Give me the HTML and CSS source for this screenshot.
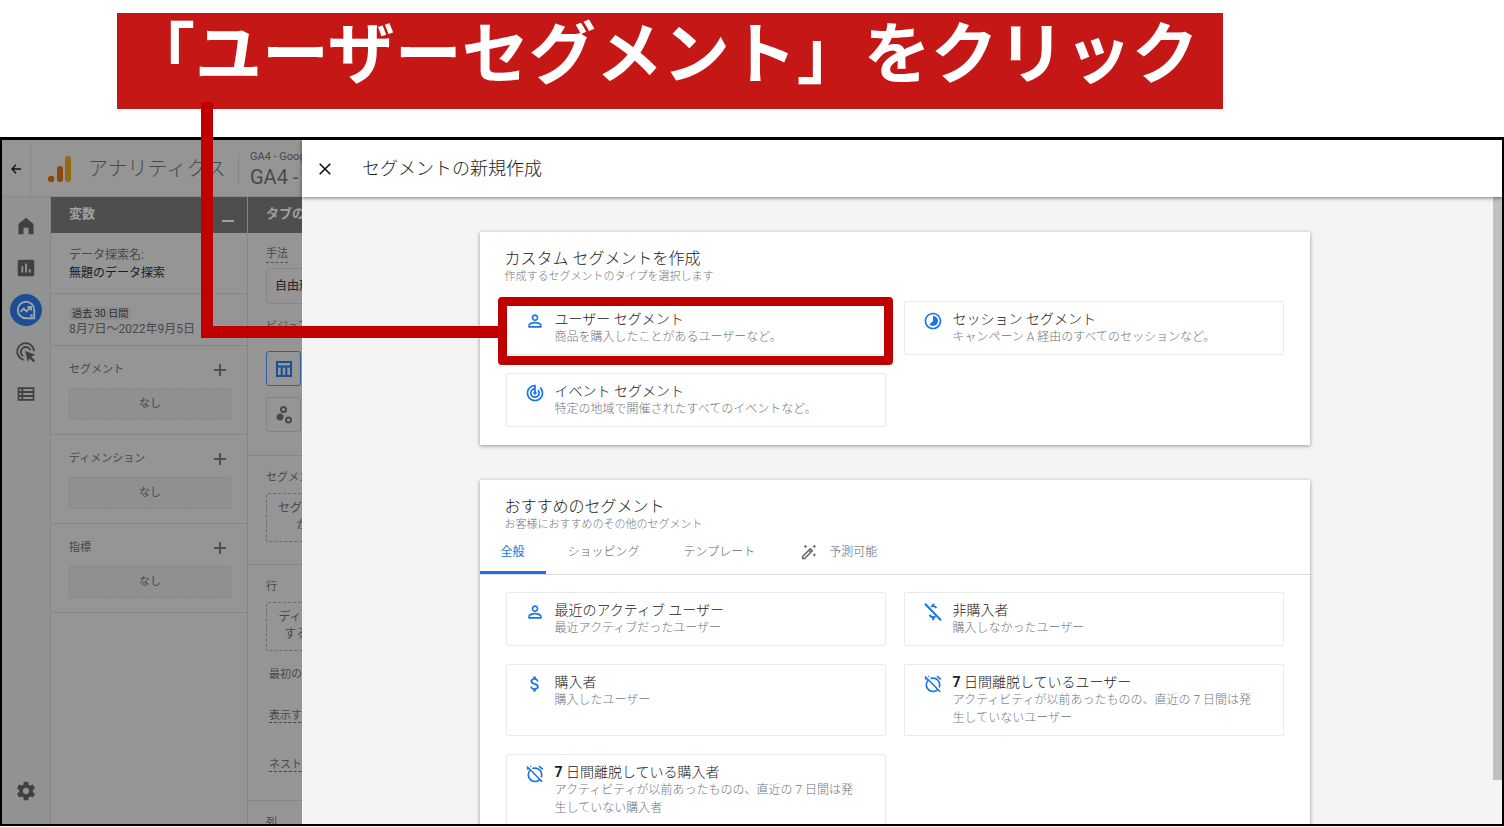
FILE: index.html
```html
<!DOCTYPE html>
<html lang="ja">
<head>
<meta charset="utf-8">
<meta name="viewport" content="width=device-width, initial-scale=1">
<title>セグメントの新規作成</title>
<link rel="stylesheet" href="styles.css">
</head>
<body>
<svg class="sprite" aria-hidden="true">
  <symbol id="i-person" viewBox="0 0 24 24"><path d="M12 5.9a2.1 2.1 0 1 1 0 4.2 2.1 2.1 0 0 1 0-4.2m0 9c2.97 0 6.1 1.46 6.1 2.1v1.1H5.9V17c0-.64 3.13-2.1 6.1-2.1M12 4C9.79 4 8 5.79 8 8s1.79 4 4 4 4-1.79 4-4-1.79-4-4-4zm0 9c-2.67 0-8 1.34-8 4v3h16v-3c0-2.66-5.33-4-8-4z"/></symbol>
  <symbol id="i-session" viewBox="0 0 24 24"><path d="M16.24 7.76A5.974 5.974 0 0 0 12 6v6l-4.24 4.24c2.34 2.34 6.14 2.34 8.49 0a5.99 5.99 0 0 0-.01-8.48zM12 2C6.48 2 2 6.48 2 12s4.48 10 10 10 10-4.48 10-10S17.52 2 12 2zm0 18c-4.42 0-8-3.58-8-8s3.58-8 8-8 8 3.58 8 8-3.58 8-8 8z"/></symbol>
  <symbol id="i-event" viewBox="0 0 24 24"><path d="M19.07 4.93l-1.41 1.41A8.014 8.014 0 0 1 20 12c0 4.42-3.58 8-8 8s-8-3.58-8-8c0-4.08 3.05-7.44 7-7.93v2.02C8.16 6.57 6 9.03 6 12c0 3.31 2.69 6 6 6s6-2.69 6-6c0-1.66-.67-3.16-1.76-4.24l-1.41 1.41C15.55 9.9 16 10.9 16 12c0 2.21-1.79 4-4 4s-4-1.79-4-4c0-1.86 1.28-3.41 3-3.86v2.14c-.6.35-1 .98-1 1.72 0 1.1.9 2 2 2s2-.9 2-2c0-.74-.4-1.38-1-1.72V2h-1C6.48 2 2 6.48 2 12s4.48 10 10 10 10-4.48 10-10c0-2.76-1.12-5.26-2.93-7.07z"/></symbol>
  <symbol id="i-money" viewBox="0 0 24 24"><path d="M11.8 10.9c-2.27-.59-3-1.2-3-2.15 0-1.09 1.01-1.85 2.7-1.85 1.78 0 2.44.85 2.5 2.1h2.21c-.07-1.72-1.12-3.3-3.21-3.81V3h-3v2.16c-1.94.42-3.5 1.68-3.5 3.61 0 2.31 1.91 3.46 4.7 4.13 2.5.6 3 1.48 3 2.41 0 .69-.49 1.79-2.7 1.79-2.06 0-2.87-.92-2.98-2.1h-2.2c.12 2.19 1.76 3.42 3.68 3.83V21h3v-2.15c1.95-.37 3.5-1.5 3.5-3.55 0-2.84-2.43-3.81-4.7-4.4z"/></symbol>
  <symbol id="i-nomoney" viewBox="0 0 24 24"><path d="M1.400 2.900L3.200 1.300 22.600 21.200 20.800 22.800zM11 2h2.600v2.300c1.500.3 2.700 1.200 3.200 2.600l-2 .9c-.5-1.100-1.500-1.700-2.800-1.700-.7 0-1.300.1-1.800.4L8.700 5c.6-.4 1.400-.7 2.300-.8zM7 15.500l2-.8c.5 1.600 1.700 2.400 3.300 2.400.8 0 1.500-.2 2-.5l1.500 1.600c-.6.5-1.400.8-2.300 1V22H11v-2.700c-2-.4-3.400-1.700-4-3.800z"/></symbol>
  <symbol id="i-alarm" viewBox="0 0 24 24"><path d="M12 6c3.87 0 7 3.13 7 7 0 .84-.16 1.65-.43 2.4l1.52 1.52c.58-1.19.91-2.51.91-3.92a9 9 0 0 0-9-9c-1.41 0-2.73.33-3.92.91L9.6 6.43C10.35 6.16 11.16 6 12 6zm10-.28l-4.6-3.86-1.29 1.53 4.6 3.86L22 5.72zM2.92 2.29L1.65 3.57 2.98 4.9l-1.11.93 1.42 1.42 1.11-.94.8.8A8.964 8.964 0 0 0 3 13c0 4.97 4.02 9 9 9 2.25 0 4.31-.83 5.89-2.2l2.2 2.2 1.27-1.27L3.89 3.27l-.97-.98zm13.55 16.1C15.26 19.39 13.7 20 12 20c-3.87 0-7-3.13-7-7 0-1.7.61-3.26 1.61-4.47l9.86 9.86zM8.02 3.28L6.6 1.86l-.86.71 1.42 1.42.86-.71z"/></symbol>
</svg>

<h1 class="banner">「ユーザーセグメント」をクリック</h1>

<div class="window">
  <section class="app" aria-label="アナリティクス">
    <header class="app-head">
      <button class="back" aria-label="戻る"><svg viewBox="0 0 12 12" width="10" height="10"><path class="line thin" d="M12 6H1.500M6 1L1.200 6 6 11"/></svg></button>
      <svg class="logo" viewBox="0 0 24 27" width="24" height="27"><rect x="17" y="0" width="6" height="26" rx="3" fill="#966914"/><rect x="9" y="10" width="6" height="16" rx="3" fill="#884a0c"/><circle cx="3.200" cy="23" r="3.200" fill="#884a0c"/></svg>
      <span class="brand">アナリティクス</span>
      <div class="property"><span class="account">GA4 - Google</span><span class="prop-name">GA4 - Google</span></div>
    </header>
    <div class="app-body">
      <nav class="rail">
        <a href="#" aria-label="ホーム"><svg viewBox="0 0 24 24" width="20" height="20"><path d="M3 9.500V22h6v-8h6v8h6V9.500L12 2z"/></svg></a>
        <a href="#" aria-label="レポート"><svg viewBox="0 0 24 24" width="22" height="22"><path d="M19 3H5c-1.100 0-2 .9-2 2v14c0 1.100.9 2 2 2h14c1.100 0 2-.9 2-2V5c0-1.100-.9-2-2-2zM9 17H7v-7h2v7zm4 0h-2V7h2v10zm4 0h-2v-4h2v4z"/></svg></a>
        <a href="#" aria-label="探索" class="current"><svg viewBox="0 0 24 24" width="22" height="22"><path class="line" d="M12 3a9 9 0 1 0 0 18h9v-9a9 9 0 0 0-9-9z"/><path class="line" d="M6 14l3.500-3.500 3 3L17 9M13.500 8.500h4v4"/><circle cx="18" cy="18" r="1.500"/></svg></a>
        <a href="#" aria-label="広告"><svg viewBox="0 0 24 24" width="22" height="22"><path class="line" d="M9.500 20.500A9.200 9.200 0 1 1 20.800 11"/><path class="line" d="M8.800 16.500A5.400 5.400 0 1 1 16.800 10"/><path d="M11 11l11 4-4.300 2.200 4.300 4.300-1.800 1.800-4.300-4.300L14 23z"/></svg></a>
        <a href="#" aria-label="設定一覧"><svg viewBox="0 0 24 24" width="20" height="20"><path fill-rule="evenodd" d="M2 4h20v16H2zM4 6v2.500h2.500V6zm4.700 0v2.500H20V6zM4 10.700v2.600h2.500v-2.600zm4.700 0v2.600H20v-2.600zM4 15.500V18h2.500v-2.500zm4.700 0V18H20v-2.500z"/></svg></a>
        <a href="#" aria-label="管理" class="admin"><svg viewBox="0 0 24 24" width="22" height="22"><path d="M19.430 12.980c.04-.32.07-.64.07-.98s-.03-.66-.07-.98l2.110-1.650c.19-.15.24-.42.12-.64l-2-3.460c-.12-.22-.39-.3-.61-.22l-2.490 1c-.52-.4-1.080-.73-1.690-.98l-.38-2.650C14.460 2.180 14.250 2 14 2h-4c-.25 0-.46.18-.49.42l-.38 2.650c-.61.25-1.170.59-1.690.98l-2.490-1c-.23-.09-.49 0-.61.22l-2 3.460c-.13.22-.07.49.12.64l2.110 1.650c-.04.32-.07.65-.07.98s.03.66.07.98l-2.110 1.650c-.19.15-.24.42-.12.64l2 3.460c.12.22.39.3.61.22l2.490-1c.52.4 1.080.73 1.690.98l.38 2.650c.03.24.24.42.49.42h4c.25 0 .46-.18.49-.42l.38-2.650c.61-.25 1.170-.59 1.690-.98l2.490 1c.23.09.49 0 .61-.22l2-3.460c.12-.22.07-.49-.12-.64l-2.110-1.650zM12 15.500c-1.930 0-3.500-1.570-3.500-3.500s1.570-3.500 3.500-3.500 3.500 1.570 3.500 3.500-1.570 3.500-3.500 3.500z"/></svg></a>
      </nav>
      <div class="vars">
        <h2 class="bar">変数<button class="minimize" aria-label="最小化"></button></h2>
        <div class="block name"><label for="explore">データ探索名:</label><input id="explore" type="text" value="無題のデータ探索"></div>
        <div class="block range"><span class="chip">過去 30 日間</span><span class="dates">8月7日～2022年9月5日</span></div>
        <div class="block group"><div class="row"><span>セグメント</span><button class="plus" aria-label="セグメントを追加"></button></div><div class="none">なし</div></div>
        <div class="block group"><div class="row"><span>ディメンション</span><button class="plus" aria-label="ディメンションを追加"></button></div><div class="none">なし</div></div>
        <div class="block group"><div class="row"><span>指標</span><button class="plus" aria-label="指標を追加"></button></div><div class="none">なし</div></div>
      </div>
      <div class="tabset">
        <h2 class="bar">タブの設定</h2>
        <div class="part first">
          <span class="hint">手法</span>
          <button class="method">自由形式</button>
          <span class="hint">ビジュアリ</span>
          <button class="viz on" aria-label="テーブル"><svg viewBox="0 0 18 18" width="18" height="18"><path class="line" d="M2 2h14v14H2zM2 6.500h14M6.700 6.500V16M11.300 6.500V16"/></svg></button>
          <button class="viz" aria-label="散布図"><svg viewBox="0 0 18 18" width="18" height="18"><circle cx="5" cy="11" r="3.500"/><circle class="line" cx="8.500" cy="3.500" r="2.500"/><circle class="line" cx="13.500" cy="14" r="2.500"/></svg></button>
        </div>
        <div class="part drop-part"><span>セグメントの比較</span><div class="drop">セグメントをドロップする<br>か選択してください</div></div>
        <div class="part rows"><span>行</span><div class="drop">ディメンションをドロップ<br>するか選択してください</div>
          <span class="opt">最初の行</span><span class="opt"><u>表示する行数</u></span><span class="opt last"><u>ネストされた行</u></span></div>
        <div class="part"><span>列</span></div>
      </div>
    </div>
  </section>

  <main class="panel">
    <header class="panel-head">
      <button class="close" aria-label="閉じる"><svg viewBox="0 0 12 12" width="12" height="12"><path class="line thin" d="M.7.7l10.600 10.600M11.300.7L.7 11.300"/></svg></button>
      <h2>セグメントの新規作成</h2>
    </header>
    <div class="panel-body">
      <div class="content">
        <section class="sheet">
          <h3>カスタム セグメントを作成</h3>
          <p class="sub">作成するセグメントのタイプを選択します</p>
          <div class="grid">
            <button class="item marked"><svg><use href="#i-person"/></svg><span class="t">ユーザー セグメント</span><span class="d">商品を購入したことがあるユーザーなど。</span></button>
            <button class="item"><svg><use href="#i-session"/></svg><span class="t">セッション セグメント</span><span class="d">キャンペーン A 経由のすべてのセッションなど。</span></button>
            <button class="item"><svg><use href="#i-event"/></svg><span class="t">イベント セグメント</span><span class="d">特定の地域で開催されたすべてのイベントなど。</span></button>
          </div>
        </section>
        <section class="sheet">
          <h3>おすすめのセグメント</h3>
          <p class="sub">お客様におすすめのその他のセグメント</p>
          <div class="tabs" role="tablist">
            <button role="tab" aria-selected="true">全般</button>
            <button role="tab" aria-selected="false">ショッピング</button>
            <button role="tab" aria-selected="false">テンプレート</button>
            <button role="tab" aria-selected="false"><svg viewBox="0 0 18 18" width="16" height="16"><path class="line thin" d="M1.800 14L10.500 5.300l2.300 2.300-8.700 8.700H1.800zM9 7l2.200 2.200"/><path d="M5 .5l.7 1.600 1.600.7-1.600.7L5 5.100l-.7-1.600-1.600-.7 1.600-.7zM15 .5l.7 1.600 1.600.7-1.600.7-.7 1.600-.7-1.600-1.600-.7 1.600-.7zM15 10l.7 1.600 1.600.7-1.600.7-.7 1.600-.7-1.600-1.600-.7 1.600-.7z"/></svg>予測可能</button>
          </div>
          <div class="grid">
            <button class="item"><svg><use href="#i-person"/></svg><span class="t">最近のアクティブ ユーザー</span><span class="d">最近アクティブだったユーザー</span></button>
            <button class="item"><svg><use href="#i-nomoney"/></svg><span class="t">非購入者</span><span class="d">購入しなかったユーザー</span></button>
            <button class="item"><svg><use href="#i-money"/></svg><span class="t">購入者</span><span class="d">購入したユーザー</span></button>
            <button class="item"><svg><use href="#i-alarm"/></svg><span class="t"><b>7</b> 日間離脱しているユーザー</span><span class="d">アクティビティが以前あったものの、直近の 7 日間は発生していないユーザー</span></button>
            <button class="item"><svg><use href="#i-alarm"/></svg><span class="t"><b>7</b> 日間離脱している購入者</span><span class="d">アクティビティが以前あったものの、直近の 7 日間は発生していない購入者</span></button>
          </div>
        </section>
      </div>
      <div class="scroll"><div class="thumb"></div></div>
    </div>
  </main>
</div>
<div class="connector" aria-hidden="true"></div>
</body>
</html>
```

FILE: styles.css
```css
* { box-sizing: border-box; }
body {
  margin: 0;
  height: 100vh;
  padding-bottom: 1px;
  display: flex;
  flex-direction: column;
  position: relative;
  overflow: hidden;
  background: #fff;
  color: #3c4043;
  font: 300 12px/18px Roboto, "Noto Sans CJK JP", sans-serif;
}
h1, h2, h3, p { margin: 0; font-weight: inherit; }
button, input {
  margin: 0;
  padding: 0;
  border: 0;
  background: none;
  font: inherit;
  color: inherit;
  text-align: left;
}
a { color: inherit; }
svg { fill: currentColor; flex: none; }
.line { fill: none; stroke: currentColor; stroke-width: 2; }
.thin { stroke-width: 1.6; }
.sprite { display: none; }

/* Callout */
.banner {
  align-self: flex-start;
  margin: 13px 0 28px 117px;
  padding: 0 24px 24px 11px;
  background: #c51816;
  color: #fff;
  font: 700 67px/72px "Noto Sans CJK JP", sans-serif;
  white-space: nowrap;
}
.connector {
  position: absolute;
  left: 201px;
  top: 102px;
  width: 300px;
  height: 236px;
  border: solid #c00000;
  border-width: 0 0 12px 12px;
}

.window {
  flex: 1;
  min-height: 0;
  display: flex;
  border: 2px solid #000;
  border-top-width: 3px;
}

/* Dimmed application */
.app {
  flex: none;
  width: 300px;
  display: flex;
  flex-direction: column;
  overflow: hidden;
  white-space: nowrap;
  background: #959595;
  color: #48494b;
  font-size: 11px;
  font-weight: 400;
}
.app-head { height: 57px; flex: none; display: flex; align-items: center; padding-top: 2px; border-bottom: 1px solid #888; }
.back { width: 29px; height: 100%; flex: none; display: flex; align-items: center; justify-content: center; border-right: 1px solid #888; color: #111; }
.logo { margin-left: 17px; }
.brand { flex: none; margin-left: 16px; font-size: 20px; font-weight: 300; line-height: 28px; width: 150px; }
.property { flex: none; display: flex; flex-direction: column; padding-left: 11px; border-left: 1px solid #858585; height: 30px; justify-content: center; }
.account { line-height: 16px; }
.prop-name { font-size: 20px; line-height: 24px; }
.app-body { flex: 1; min-height: 0; display: flex; }
.rail {
  width: 49px;
  flex: none;
  display: flex;
  flex-direction: column;
  align-items: center;
  padding: 8px 0 12px;
  border-right: 1px solid #858787;
  background: #909392;
  color: #3e4042;
}
.rail a { height: 42px; width: 32px; display: flex; align-items: center; justify-content: center; }
.rail .current { height: 32px; margin: 5px 0; border-radius: 50%; background: #1d4e94; color: #a0a6ae; }
.rail .admin { margin-top: auto; }
.bar { height: 36px; display: flex; align-items: center; padding: 0 13px 2px 18px; background: #4e4e4e; color: #a0a0a0; font-size: 13px; font-weight: 700; }
.minimize { width: 12px; height: 2px; margin: 14px 0 0 auto; background: #a0a0a0; }
.vars { width: 197px; flex: none; border-right: 1px solid #858585; }
.block { padding: 0 16px 0 18px; border-bottom: 1px solid #858585; }
.name { height: 61px; padding-top: 13px; font-size: 12px; }
.name label, .name input { display: block; width: 100%; height: 18px; }
.name input { color: #1c1c1c; }
.range { height: 52px; padding-top: 13px; }
.chip { display: table; padding: 0 3px; background: #8b8e8d; color: #2b2c2d; font-size: 10px; line-height: 13px; }
.dates { display: block; font-size: 12px; line-height: 18px; }
.group { padding-top: 14px; padding-bottom: 14px; }
.row { display: flex; justify-content: space-between; align-items: center; height: 20px; margin-bottom: 8px; padding-right: 5px; }
.plus { width: 12px; height: 12px; background: linear-gradient(#505050, #505050) center / 12px 2px no-repeat, linear-gradient(#505050, #505050) center / 2px 12px no-repeat; }
.none { height: 32px; border: 1px dashed #858585; border-radius: 2px; background: #909090; text-align: center; line-height: 29px; }
.tabset { flex: 1; min-width: 0; overflow: hidden; }
.tabset .part { padding: 13px 0 0 18px; border-bottom: 1px solid #858585; }
.part span { display: block; line-height: 18px; }
.part .hint { display: table; line-height: 16px; border-bottom: 1px dashed #555; }
.method { display: block; width: 80px; height: 36px; margin: 5px 0 15px; padding-left: 8px; border: 1px solid #858585; border-radius: 4px; color: #222; font-size: 12px; }
.first { height: 223px; }
.viz { width: 35px; height: 35px; margin: 15px 0 11px; display: flex; align-items: center; justify-content: center; border: 1px solid #828282; border-radius: 3px; }
.viz + .viz { margin: 0; }
.viz.on { color: #1d4e94; border-color: #2f5f9e; }
.drop { width: 168px; height: 49px; margin-top: 6px; padding: 6px 0; border: 1px dashed #6a6a6a; border-radius: 2px; line-height: 17px; font-size: 12px; text-align: center; }
.drop-part { height: 109px; }
.rows { height: 236px; }
.opt { padding: 15px 0 0 3px; }
.opt + .opt { padding-top: 23px; }
.opt + .opt.last { padding-top: 31px; }
.opt u { text-decoration: none; border-bottom: 1px dashed #444; }

/* Segment builder panel */
.panel { flex: 1; min-width: 0; display: flex; flex-direction: column; background: #f4f4f4; }
.panel-head { position: relative; height: 57px; flex: none; display: flex; align-items: center; gap: 31px; padding: 2px 17px; background: #fff; box-shadow: 0 1px 4px rgba(0, 0, 0, .5); }
.panel-head h2 { font-size: 18px; line-height: 26px; color: #202124; }
.close { width: 12px; height: 12px; display: flex; color: #111; }
.panel-body { flex: 1; min-height: 0; display: flex; overflow: hidden; }
.content { flex: 1; min-width: 0; padding: 35px 26px 0 20px; }
.scroll { width: 9px; flex: none; }
.thumb { height: 93%; background: #c1c1c1; }
.sheet { max-width: 830px; margin: 0 auto 35px; padding: 17px 0 18px; background: #fff; box-shadow: 0 1px 4px rgba(0, 0, 0, .4); }
.sheet h3 { padding: 0 25px; font-size: 16px; line-height: 20px; color: #202124; }
.sub { padding: 0 25px; font-size: 11px; line-height: 16px; color: #70757a; }
.grid { display: grid; grid-template-columns: 1fr 1fr; gap: 18px; padding: 16px 26px 0; }
.item {
  position: relative;
  display: grid;
  grid-template-columns: 20px 1fr;
  column-gap: 10px;
  align-content: start;
  padding: 8px 20px 8px 18px;
  border: 1px solid #e8eaed;
  border-radius: 2px;
  min-height: 54px;
}
.item svg { grid-row: span 2; width: 20px; height: 20px; margin-top: 1px; color: #1a73e8; }
.t { font-size: 14px; line-height: 18px; color: #202124; }
.t b { font-weight: 700; }
.d { font-size: 12px; line-height: 18px; color: #70757a; }
.marked::after { content: ""; position: absolute; inset: -5px -8px -11px -9px; border: 9px solid #c00000; border-radius: 4px; }
.tabs { display: flex; height: 42px; margin-bottom: 1px; border-bottom: 1px solid #dadce0; color: #5f6368; }
.tabs button { display: flex; align-items: center; gap: 12px; padding: 0 21px; border-bottom: 3px solid transparent; }
.tabs button + button { padding: 0 22px; }
.tabs button:nth-child(4) { padding-left: 24px; }
.tabs [aria-selected="true"] { color: #1a73e8; border-color: #1a73e8; font-weight: 400; }
```
